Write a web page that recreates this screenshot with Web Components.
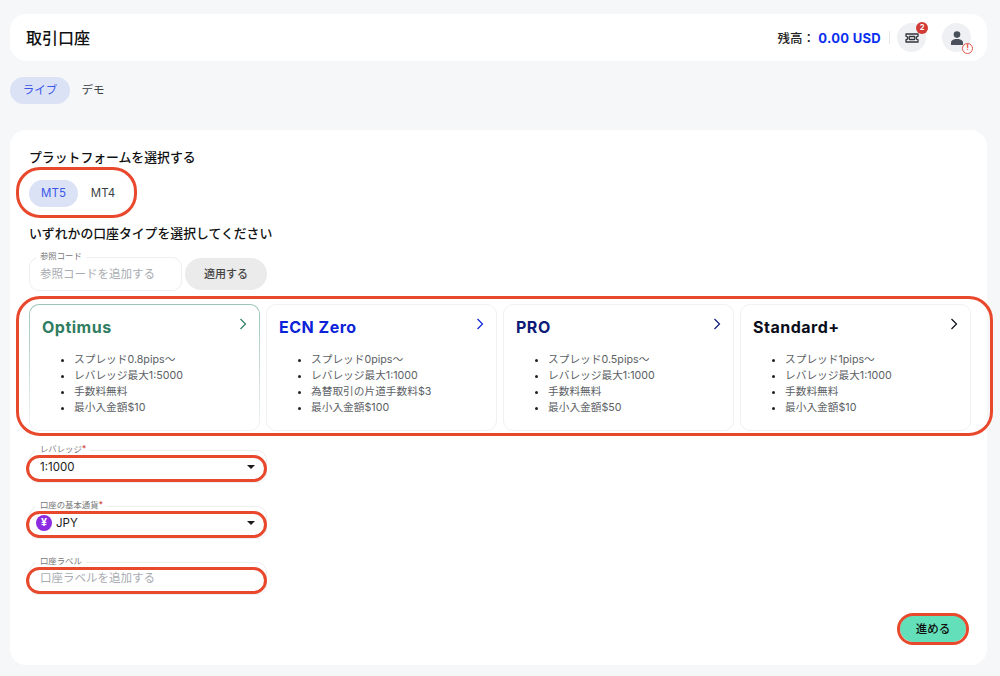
<!DOCTYPE html>
<html lang="ja">
<head>
<meta charset="utf-8">
<title>取引口座</title>
<style>
  html, body { margin: 0; height: 676px; overflow: hidden; background: #f6f7f9; }
  body { font-family: "Inter", "Noto Sans CJK JP", sans-serif; color: #111; }
</style>
</head>
<body>
<account-page></account-page>

<script>
const JP = `"Inter", "Noto Sans CJK JP", sans-serif`;

class TopBar extends HTMLElement {
  constructor() {
    super();
    this.attachShadow({ mode: 'open' }).innerHTML = `
      <style>
        :host { display: flex; align-items: center; justify-content: space-between; height: 47px; padding: 0 16px 0 16px; background: #fff; border-radius: 16px; font-family: ${JP}; }
        h1 { margin: 0 0 2px; font-size: 16px; font-weight: 500; color: #111; }
        .right { display: flex; align-items: center; }
        .bal { font-size: 12.5px; font-weight: 500; color: #222; }
        .bal b { color: #0a2fee; font-weight: 700; font-size: 13px; letter-spacing: .3px; }
        .sep { width: 1px; height: 13px; background: #e6e7ea; margin: 0 7px 0 8px; }
        .round { position: relative; width: 29px; height: 29px; border-radius: 50%; background: #eff0f3; display: flex; align-items: center; justify-content: center; }
        .round + .round { margin-left: 16px; }
        .count { position: absolute; top: -1px; right: -2px; width: 12px; height: 12px; border-radius: 50%; background: #d23a34; color: #fff; font-size: 7.5px; font-weight: 700; line-height: 12px; text-align: center; }
        .warn { position: absolute; right: -2px; bottom: -2px; box-sizing: border-box; width: 11px; height: 11px; border: 1.2px solid #e0544c; border-radius: 50%; background: #fff; color: #e0544c; font-size: 7.5px; font-weight: 800; line-height: 8.6px; text-align: center; }
      </style>
      <h1>取引口座</h1>
      <div class="right">
        <span class="bal">残高： <b>0.00 USD</b></span>
        <span class="sep"></span>
        <div class="round">
          <svg width="14" height="10" viewBox="0 0 14 10" fill="none" stroke="#30343c" stroke-width="1.3"><path d="M1 1h12v2.300a1.700 1.700 0 0 0 0 3.400V9H1V6.700a1.700 1.700 0 0 0 0-3.400z" stroke-linejoin="round"/><rect x="4.200" y="3.500" width="5.600" height="3" rx=".4"/></svg>
          <span class="count">2</span>
        </div>
        <div class="round">
          <svg width="12" height="14" viewBox="0 0 12 14" fill="#4a505b"><circle cx="6" cy="3.600" r="3.300"/><path d="M0 14v-2.300C0 9.300 2.700 8 6 8s6 1.300 6 3.700V14z"/></svg>
          <span class="warn">!</span>
        </div>
      </div>`;
  }
}

class PillTabs extends HTMLElement {
  connectedCallback() {
    const items = this.getAttribute('items').split(',');
    const widths = (this.getAttribute('widths') || '60,46').split(',');
    this.attachShadow({ mode: 'open' }).innerHTML = `
      <style>
        :host { display: flex; font-family: ${JP}; font-size: 11.5px; }
        span { height: 27px; line-height: 27px; text-align: center; border-radius: 14px; color: #3b3f46; }
        .on { background: #dbe2f5; color: #3a56ea; }
      </style>
      ${items.map((t, i) => `<span class="${i === 0 ? 'on' : ''}" style="width:${widths[i]}px">${t}</span>`).join('')}`;
  }
}

class FormField extends HTMLElement {
  connectedCallback() {
    const label = this.getAttribute('label');
    const req = this.hasAttribute('required');
    const select = this.hasAttribute('select');
    const ph = this.getAttribute('placeholder');
    this.attachShadow({ mode: 'open' }).innerHTML = `
      <style>
        :host { display: block; position: relative; box-sizing: border-box; height: 33px; border: 1px solid #eceef1; border-radius: 10px; background: #fff; font-family: ${JP}; }
        .lab { position: absolute; left: 6px; top: -7px; padding: 0 4px; background: #fff; font-size: 8.400px; line-height: 10px; color: #777; }
        .lab i { color: #d23a34; font-style: normal; }
        .val { display: flex; align-items: center; gap: 4px; height: 100%; padding: 0 10px; font-size: 11.500px; color: #1a1a1a; }
        .ph { color: #a9acb2; margin-top: -3px; }
        .arrow { position: absolute; right: 11px; top: 14px; width: 0; height: 0; border: 4px solid transparent; border-top: 4.500px solid #1a1a1a; border-bottom: 0; }
        ::slotted(*) { margin-left: -4px; }
      </style>
      <span class="lab">${label}${req ? '<i>*</i>' : ''}</span>
      <div class="val"><slot name="icon"></slot>${ph ? `<span class="ph">${ph}</span>` : `<slot></slot>`}</div>
      ${select ? '<span class="arrow"></span>' : ''}`;
  }
}

class PlanCard extends HTMLElement {
  connectedCallback() {
    const color = this.getAttribute('color');
    this.attachShadow({ mode: 'open' }).innerHTML = `
      <style>
        :host { display: block; position: relative; box-sizing: border-box; height: 127px; padding: 12px 12px; background: #fff; border: 1px solid #f0f1f3; border-radius: 10px; font-family: ${JP}; }
        :host([active]) { border-color: transparent; background: linear-gradient(#fff, #fff) padding-box, linear-gradient(#9cc4b6, #f4f6f6) border-box; }
        h3 { margin: 0 0 15px; font-size: 16px; line-height: 20px; font-weight: 700; letter-spacing: .5px; color: ${color}; }
        ul { margin: 0; padding: 0 0 0 32px; font-size: 10.700px; line-height: 16px; color: #5c5f65; }
        li::marker { color: #222; }
        svg { position: absolute; right: 12px; top: 13px; }
      </style>
      <h3>${this.getAttribute('name')}</h3>
      <ul></ul>
      <svg width="8" height="12" viewBox="0 0 8 12" fill="none" stroke="${color}" stroke-width="1.2"><path d="M1.500 1l5 5-5 5"/></svg>`;
    this.shadowRoot.querySelector('ul').innerHTML =
      this.getAttribute('points').split('|').map(p => `<li>${p}</li>`).join('');
  }
}

class MarkRing extends HTMLElement {
  constructor() {
    super();
    this.attachShadow({ mode: 'open' }).innerHTML = `
      <style>
        :host { display: block; position: absolute; box-sizing: border-box; border: 3px solid #e8492c; pointer-events: none; }
      </style>`;
  }
}

class AccountPage extends HTMLElement {
  constructor() {
    super();
    this.attachShadow({ mode: 'open' }).innerHTML = `
      <style>
        :host { display: block; position: relative; box-sizing: border-box; width: 1000px; height: 676px; padding: 14px 13px 11px 10px; font-family: ${JP}; }
        pill-tabs.top { margin: 16px 0 26px; }
        .panel { box-sizing: border-box; height: 535px; padding: 20px 17px 0 19px; background: #fff; border-radius: 16px; position: relative; }
        h2 { margin: 0; font-size: 12.850px; line-height: 16px; font-weight: 500; color: #111; }
        .platform { margin: 14px 0 19px; }
        .ref { display: flex; align-items: center; gap: 3px; margin: 15px 0 13px; }
        .ref form-field { width: 153px; height: 34px; }
        .apply { width: 82px; height: 32px; line-height: 32px; text-align: center; border-radius: 16px; background: #ebebeb; font-size: 11px; font-weight: 500; color: #444; }
        .plans { display: grid; grid-template-columns: 231px 231px 231px 231px; gap: 6px; }
        .fields { display: grid; gap: 23px; width: 238px; margin-top: 19px; }
        .yen { width: 16px; height: 16px; border-radius: 50%; background: #8c2be0; color: #fff; font-size: 10.500px; font-weight: 700; line-height: 16px; text-align: center; }
        .go { position: absolute; right: 21px; bottom: 23px; width: 66px; height: 27px; line-height: 29px; text-align: center; border-radius: 14px; background: #63e0ba; font-size: 11.500px; font-weight: 500; color: #111; }
        mark-ring.r1 { left: 16px; top: 167px; width: 121px; height: 51px; border-radius: 24px; }
        mark-ring.r2 { left: 16px; top: 296px; width: 977px; height: 140px; border-radius: 24px; }
        mark-ring.r3 { left: 26px; top: 455px; width: 241px; height: 27px; border-radius: 14px; }
        mark-ring.r4 { left: 26px; top: 511px; width: 241px; height: 27px; border-radius: 14px; }
        mark-ring.r5 { left: 26px; top: 567px; width: 241px; height: 27px; border-radius: 14px; }
        mark-ring.r6 { left: 897px; top: 613px; width: 72px; height: 32px; border-radius: 16px; }
      </style>
      <top-bar></top-bar>
      <pill-tabs class="top" items="ライブ,デモ"></pill-tabs>
      <section class="panel">
        <h2>プラットフォームを選択する</h2>
        <pill-tabs class="platform" items="MT5,MT4" widths="49,50"></pill-tabs>
        <h2>いずれかの口座タイプを選択してください</h2>
        <div class="ref">
          <form-field label="参照コード" placeholder="参照コードを追加する"></form-field>
          <span class="apply">適用する</span>
        </div>
        <div class="plans">
          <plan-card active name="Optimus" color="#2f7d62" points="スプレッド0.8pips〜|レバレッジ最大1:5000|手数料無料|最小入金額$10"></plan-card>
          <plan-card name="ECN Zero" color="#0b22d8" points="スプレッド0pips〜|レバレッジ最大1:1000|為替取引の片道手数料$3|最小入金額$100"></plan-card>
          <plan-card name="PRO" color="#0d1a78" points="スプレッド0.5pips〜|レバレッジ最大1:1000|手数料無料|最小入金額$50"></plan-card>
          <plan-card name="Standard+" color="#0b0d1a" points="スプレッド1pips〜|レバレッジ最大1:1000|手数料無料|最小入金額$10"></plan-card>
        </div>
        <div class="fields">
          <form-field label="レバレッジ" required select>1:1000</form-field>
          <form-field label="口座の基本通貨" required select><span slot="icon" class="yen">¥</span>JPY</form-field>
          <form-field label="口座ラベル" placeholder="口座ラベルを追加する"></form-field>
        </div>
        <span class="go">進める</span>
      </section>
      <mark-ring class="r1"></mark-ring>
      <mark-ring class="r2"></mark-ring>
      <mark-ring class="r3"></mark-ring>
      <mark-ring class="r4"></mark-ring>
      <mark-ring class="r5"></mark-ring>
      <mark-ring class="r6"></mark-ring>`;
  }
}

customElements.define('top-bar', TopBar);
customElements.define('pill-tabs', PillTabs);
customElements.define('form-field', FormField);
customElements.define('plan-card', PlanCard);
customElements.define('mark-ring', MarkRing);
customElements.define('account-page', AccountPage);
</script>
</body>
</html>
